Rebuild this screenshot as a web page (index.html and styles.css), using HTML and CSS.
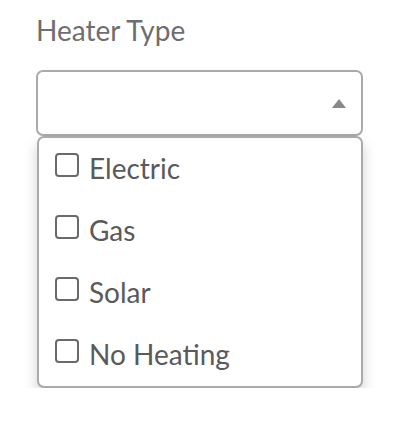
FILE: index.html
```html
<!DOCTYPE html>
<html lang="en">
<head>
  <meta charset="UTF-8" />
  <meta name="viewport" content="width=device-width, initial-scale=1.0" />
  <title>Heater Type</title>
  <link rel="stylesheet" href="styles.css">
</head>
<body>
  <div class="field">
    <div class="field-label">Heater Type</div>
    <div class="select">
      <div class="select-box">
        <span class="caret"></span>
      </div>
      <ul class="options">
        <li class="option"><span class="check"></span>Electric</li>
        <li class="option"><span class="check"></span>Gas</li>
        <li class="option"><span class="check"></span>Solar</li>
        <li class="option"><span class="check"></span>No Heating</li>
      </ul>
    </div>
  </div>
</body>
</html>
```

FILE: styles.css
```css
* {
  margin: 0;
  padding: 0;
  box-sizing: border-box;
}
body {
  font-family: 'Lato', sans-serif;
  background: #fff;
  color: #5a5a5a;
}
.field {
  padding: 13px 43px 0 36px;
}
.field-label {
  font-size: 28px;
  line-height: 34px;
  color: #6e6e6e;
}
.select {
  margin-top: 23px;
}
.select-box {
  height: 66px;
  border: 2px solid #aaa;
  border-radius: 7px;
  display: flex;
  align-items: center;
  justify-content: flex-end;
  padding-right: 15px;
}
.caret {
  width: 0;
  height: 0;
  border-left: 7px solid transparent;
  border-right: 7px solid transparent;
  border-bottom: 9px solid #888;
}
.options {
  list-style: none;
  margin: 0 0 0 1px;
  border: 2px solid #aaa;
  border-radius: 7px;
  background: #fff;
  box-shadow: 0 7px 14px rgba(0, 0, 0, 0.18);
}
.option {
  height: 62px;
  display: flex;
  align-items: center;
  padding: 0 0 3px 16px;
  font-size: 28px;
  color: #5a5a5a;
}
.check {
  width: 24px;
  height: 24px;
  border: 2px solid #6a6a6a;
  border-radius: 4px;
  margin-right: 10px;
  margin-top: -5px;
}
```
